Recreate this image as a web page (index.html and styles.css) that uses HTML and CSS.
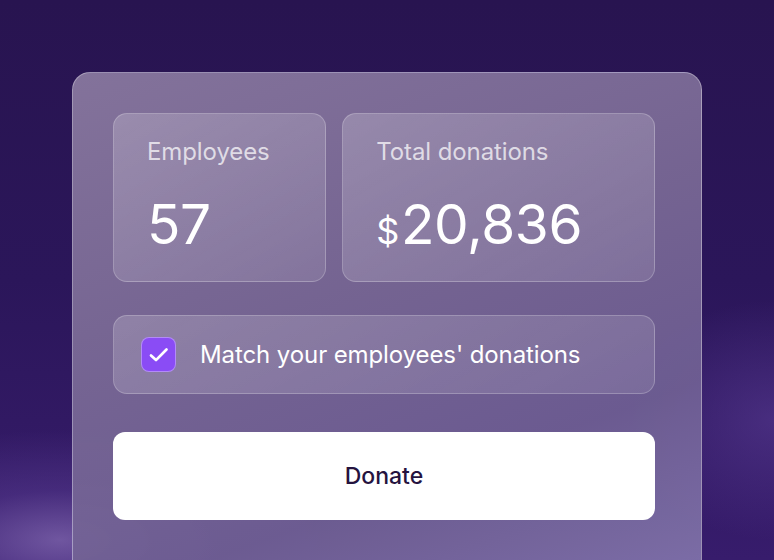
FILE: index.html
```html
<!DOCTYPE html>
<html lang="en">
<head>
  <meta charset="UTF-8" />
  <meta name="viewport" content="width=device-width, initial-scale=1.0" />
  <title>Donations</title>
  <link rel="stylesheet" href="styles.css">
</head>
<body>
  <main class="card">
    <div class="stats">
      <div class="stat statSmall">
        <span class="statLabel">Employees</span>
        <span class="statValue">57</span>
      </div>
      <div class="stat statWide">
        <span class="statLabel">Total donations</span>
        <span class="statValue"><span class="currency">$</span>20,836</span>
      </div>
    </div>

    <label class="matchRow">
      <span class="checkBox">
        <svg width="24" height="24" viewBox="0 0 24 24" fill="none">
          <path d="M4 12.5l5 4.6 10.5-10.6" stroke="#fff" stroke-width="2.7" stroke-linecap="round" stroke-linejoin="round"/>
        </svg>
      </span>
      <span class="matchText">Match your employees' donations</span>
    </label>

    <button class="donateBtn" type="button">Donate</button>
  </main>
</body>
</html>
```

FILE: styles.css
```css
*{box-sizing:border-box;}
html,body{height:100%;}
body{margin:0;height:560px;overflow:hidden;padding:72px 0 0 72px;font-family:"Inter","Noto Sans",sans-serif;
  background:
    radial-gradient(ellipse 260px 110px at 60px 540px,rgba(150,125,195,.6) 0%,rgba(110,80,170,.3) 45%,rgba(60,30,120,0) 100%),
    radial-gradient(ellipse 150px 120px at 774px 420px,rgba(95,65,155,.5) 0%,rgba(60,30,120,0) 100%),
    linear-gradient(180deg,#281450 0%,#2b165a 50%,#371c6c 100%);}
.card{width:630px;height:488px;padding:40px 46px 0 40px;border-radius:18px 18px 0 0;border:1.5px solid rgba(255,255,255,.32);border-bottom:none;background:linear-gradient(160deg,rgba(138,122,160,.93) 0%,rgba(122,106,150,.93) 45%,rgba(112,96,148,.93) 75%,rgba(128,114,170,.93) 100%);display:flex;flex-direction:column;}
.stats{display:flex;gap:16px;}
.stat{height:169px;border-radius:14px;border:1.5px solid rgba(255,255,255,.22);background:linear-gradient(150deg,rgba(255,255,255,.2) 0%,rgba(255,255,255,.1) 100%);padding:23px 33px 0;display:flex;flex-direction:column;}
.statSmall{width:214px;}
.statWide{width:314px;}
.statLabel{font-size:24px;line-height:30px;color:rgba(255,255,255,.72);font-weight:400;letter-spacing:-.1px;}
.statValue{margin-top:25px;font-size:55px;line-height:64px;color:#fff;font-weight:400;letter-spacing:-.4px;}
.currency{font-size:36px;margin-right:2px;}
.matchRow{margin-top:33px;height:79px;border-radius:14px;border:1.5px solid rgba(255,255,255,.22);background:linear-gradient(150deg,rgba(255,255,255,.18) 0%,rgba(255,255,255,.1) 100%);display:flex;align-items:center;padding-left:27px;gap:24px;cursor:pointer;}
.checkBox{width:35px;height:35px;border-radius:8px;background:#8a4cf5;border:1px solid rgba(255,255,255,.35);display:flex;align-items:center;justify-content:center;}
.matchText{font-size:24px;color:#fff;letter-spacing:-.1px;}
.donateBtn{margin-top:38px;height:88px;flex-shrink:0;border:none;border-radius:12px;background:#fff;color:#25133f;font-family:inherit;font-size:23px;font-weight:450;cursor:pointer;}
```
